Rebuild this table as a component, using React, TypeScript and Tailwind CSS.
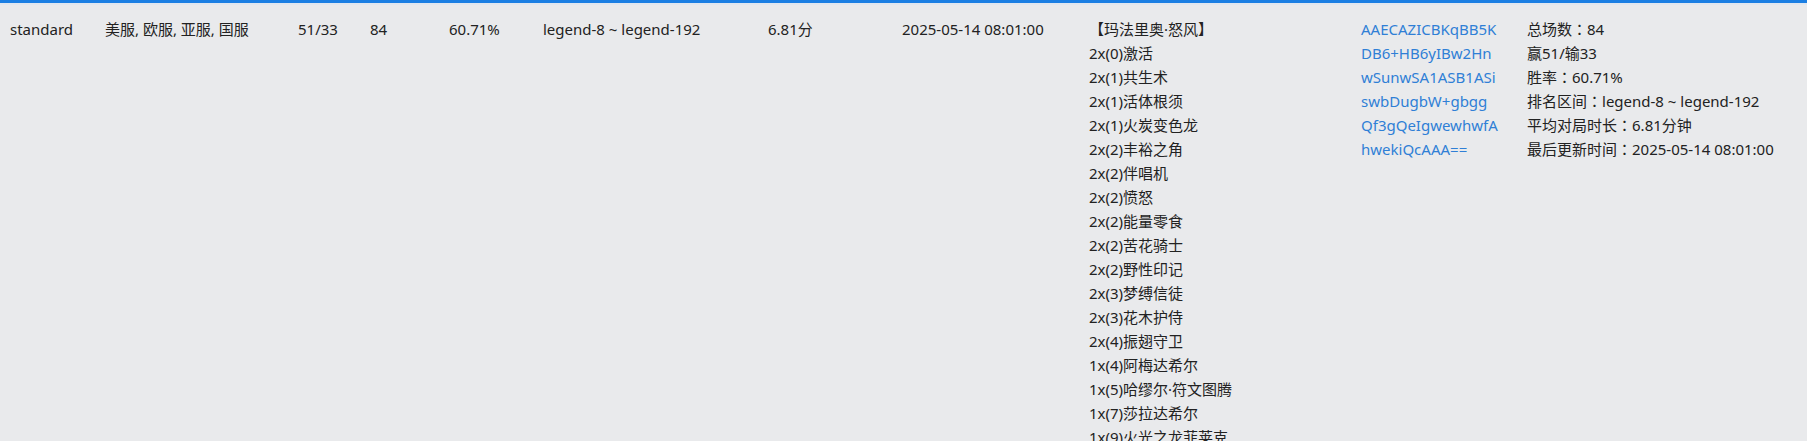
import React from "react";

// One row of the deck stats table (scrolled so the header is out of view)
const deckCards = [
  "2x(0)激活",
  "2x(1)共生术",
  "2x(1)活体根须",
  "2x(1)火炭变色龙",
  "2x(2)丰裕之角",
  "2x(2)伴唱机",
  "2x(2)愤怒",
  "2x(2)能量零食",
  "2x(2)苦花骑士",
  "2x(2)野性印记",
  "2x(3)梦缚信徒",
  "2x(3)花木护侍",
  "2x(4)振翅守卫",
  "1x(4)阿梅达希尔",
  "1x(5)哈缪尔·符文图腾",
  "1x(7)莎拉达希尔",
  "1x(9)火光之龙菲莱克",
];

// deck code, split the way the narrow column wraps it
const codeLines = [
  "AAECAZICBKqBB5K",
  "DB6+HB6yIBw2Hn",
  "wSunwSA1ASB1ASi",
  "swbDugbW+gbgg",
  "Qf3gQeIgwewhwfA",
  "hwekiQcAAA==",
];

const summary: [string, string | null, string][] = [
  ["总场数", "：", "84"],
  ["赢51/输33", null, ""],
  ["胜率", "：", "60.71%"],
  ["排名区间", "：", "legend-8 ~ legend-192"],
  ["平均对局时长", "：", "6.81分钟"],
  ["最后更新时间", "：", "2025-05-14 08:01:00"],
];

export default function App() {
  return (
    <div
      className="h-screen overflow-hidden bg-[#e9eaec] text-[15px] leading-[24px] text-[#222]"
      style={{ fontFamily: '"Noto Sans", "Noto Sans CJK SC", sans-serif' }}
    >
      {/* selected row border */}
      <div className="h-[3px] bg-[#1b7fe3]" />
      <div className="h-[2px] bg-[#e1e7ef]" />

      <div className="grid grid-cols-[95px_193px_72px_79px_94px_225px_134px_187px_272px_166px_1fr] pl-[10px] pt-[12px]">
        <div>standard</div>
        <div>美服, 欧服, 亚服, 国服</div>
        <div>51/33</div>
        <div>84</div>
        <div>60.71%</div>
        <div>legend-8 ~ legend-192</div>
        <div>6.81分</div>
        <div>2025-05-14 08:01:00</div>
        <div className="flex flex-col">
          <span>【玛法里奥·怒风】</span>
          {deckCards.map((card) => (
            <span key={card}>{card}</span>
          ))}
        </div>
        <div className="flex flex-col text-[#2f7fd6]">
          {codeLines.map((line) => (
            <span key={line}>{line}</span>
          ))}
        </div>
        <div className="flex flex-col">
          {summary.map(([label, colon, value]) => (
            <span key={label}>
              {label}
              {colon && (
                <span className="font-['Noto_Sans_CJK_TC',sans-serif]">{colon}</span>
              )}
              {value}
            </span>
          ))}
        </div>
      </div>
    </div>
  );
}
